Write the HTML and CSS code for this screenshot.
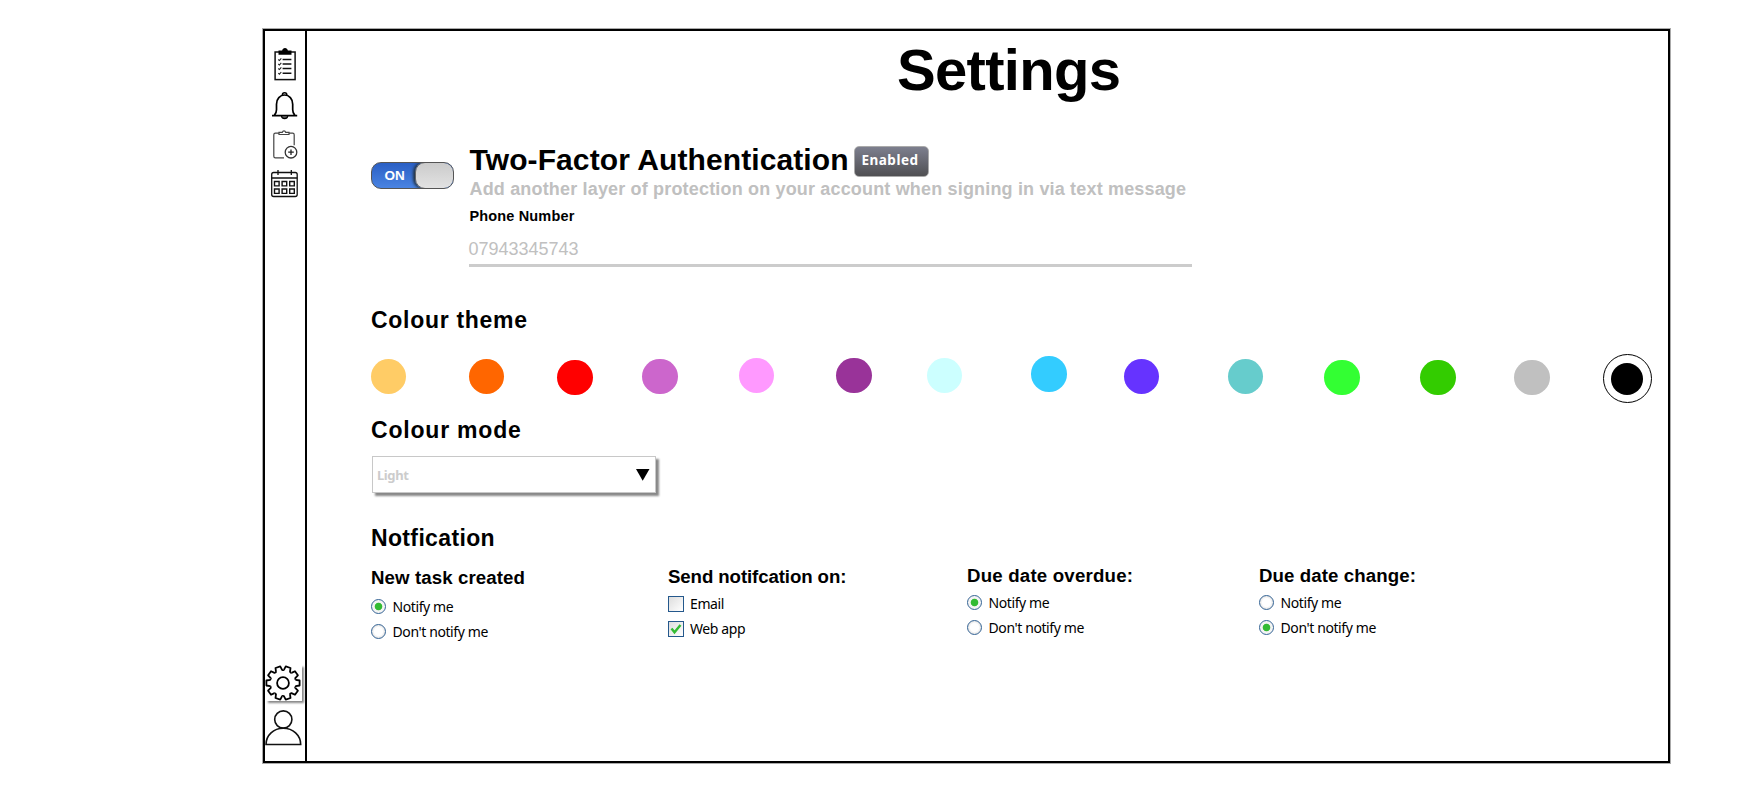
FILE: index.html
```html
<!DOCTYPE html>
<html lang="en">
<head>
<meta charset="utf-8">
<title>Settings</title>
<link rel="stylesheet" href="styles.css">
</head>
<body>
<div class="frame">
  <nav class="sidebar">
    <svg class="icon tasks" width="40" height="36" viewBox="265 46 40 36">
      <rect x="275.1" y="52" width="20" height="27.6" fill="none" stroke="#111" stroke-width="1.5"/>
      <path d="M278.500 54.800v-4.300h3.600c.4-1.500 1.400-2.500 2.900-2.500s2.500 1 2.900 2.500h3.600v4.300z" fill="#000"/>
      <path d="M282.600 59.600h8.800M282.600 64h8.800M282.600 68.500h8.800M282.600 73.200h8.800" stroke="#111" stroke-width="1.500"/>
      <path d="M278.300 59.500l1.100 1 1.900-2.200M278.300 64l1.100 1 1.900-2.200M278.300 68.500l1.100 1 1.900-2.200M278.300 73.200l1.100 1 1.900-2.200" fill="none" stroke="#222" stroke-width="1.100"/>
    </svg>
    <svg class="icon bell" width="40" height="30" viewBox="265 91 40 30">
      <path d="M272 115.600h25.200M274.300 115.300c1.500-1.600 2.200-3 2.200-5.600v-5.500c0-5.200 3.500-9.200 8.100-9.200s8.100 4 8.100 9.200v5.500c0 2.600.7 4 2.200 5.600" fill="none" stroke="#000" stroke-width="1.700"/>
      <path d="M282.400 95c0-3 4.400-3 4.400 0" fill="none" stroke="#000" stroke-width="1.600"/>
      <path d="M281.500 116c.5 3.600 5.700 3.600 6.200 0" fill="#555" stroke="#000" stroke-width="1.300"/>
    </svg>
    <svg class="icon add" width="40" height="32" viewBox="265 129 40 32">
      <path d="M284 157.800h-8.600c-1 0-1.600-.6-1.600-1.600v-21.400c0-1 .6-1.600 1.600-1.600h17.200c1 0 1.600.6 1.600 1.600v10.500" fill="none" stroke="#444" stroke-width="1.200"/>
      <path d="M279 134.500v-2.200h3.300c.3-1 .9-1.400 1.700-1.400s1.400.4 1.700 1.400h3.300v2.200z" fill="#fff" stroke="#444" stroke-width="1.200"/>
      <circle cx="291" cy="152.200" r="5.800" fill="#fff" stroke="#333" stroke-width="1.300"/>
      <path d="M288.200 152.200h5.600M291 149.400v5.600" stroke="#222" stroke-width="1.300"/>
    </svg>
    <svg class="icon calendar" width="40" height="30" viewBox="265 169 40 30">
      <rect x="271.700" y="172.500" width="25.500" height="24" rx="2" fill="none" stroke="#111" stroke-width="1.300"/>
      <path d="M271.700 178h25.500M278 170v5M291.300 170v5" stroke="#111" stroke-width="1.300"/>
      <path d="M274.500 181.500h4.600v4.400h-4.600zM282.100 181.500h4.600v4.400h-4.600zM289.700 181.500h4.600v4.400h-4.600zM274.500 189h4.600v4.400h-4.600zM282.100 189h4.600v4.400h-4.600zM289.700 189h4.600v4.400h-4.600z" fill="none" stroke="#111" stroke-width="1.400"/>
    </svg>
    <div class="gear-tile">
      <svg class="gear" width="36" height="36" viewBox="-18 -18 36 36">
        <defs><path id="tooth" d="M-3.200-12.800L-2.500-16.600H2.500L3.200-12.800Q4.500-11.800 4.950-12.200"/></defs>
        <g fill="none" stroke="#000" stroke-width="1.800" stroke-linejoin="round">
          <use href="#tooth" transform="rotate(18)"/><use href="#tooth" transform="rotate(54)"/>
          <use href="#tooth" transform="rotate(90)"/><use href="#tooth" transform="rotate(126)"/>
          <use href="#tooth" transform="rotate(162)"/><use href="#tooth" transform="rotate(198)"/>
          <use href="#tooth" transform="rotate(234)"/><use href="#tooth" transform="rotate(270)"/>
          <use href="#tooth" transform="rotate(306)"/><use href="#tooth" transform="rotate(342)"/>
          <circle r="5.900"/>
        </g>
      </svg>
    </div>
    <svg class="icon user" width="40" height="38" viewBox="265 709 40 38">
      <g fill="none" stroke="#111" stroke-width="1.600">
        <circle cx="283.300" cy="719.500" r="8.600"/>
        <path d="M266 744.500c0-9.500 7.700-16.300 17.300-16.300s17.400 6.800 17.400 16.300z"/>
      </g>
    </svg>
  </nav>
  <main class="main">
    <h1 class="title">Settings</h1>

    <section class="twofactor">
      <div class="toggle"><span class="toggle-label">ON</span><span class="knob"></span></div>
      <div class="tf-body">
        <div class="tf-head"><h2 class="tf-title">Two-Factor Authentication</h2><span class="badge">Enabled</span></div>
        <p class="tf-sub">Add another layer of protection on your account when signing in via text message</p>
        <div class="phone-label">Phone Number</div>
        <div class="phone">07943345743</div>
      </div>
    </section>

    <h3 class="heading theme">Colour theme</h3>
    <div class="swatches">
      <span class="dot sand"></span><span class="dot orange"></span><span class="dot red"></span><span class="dot orchid"></span><span class="dot pink"></span><span class="dot purple"></span><span class="dot ice"></span><span class="dot sky"></span><span class="dot indigo"></span><span class="dot teal"></span><span class="dot lime"></span><span class="dot green"></span><span class="dot grey"></span><span class="ring"><span class="dot black"></span></span>
    </div>

    <h3 class="heading mode">Colour mode</h3>
    <div class="select"><span>Light</span><svg width="14" height="12" viewBox="0 0 14 12"><path d="M0 0h13.500L6.700 11.700z"/></svg></div>

    <h3 class="heading notif">Notfication</h3>
    <div class="groups">
      <div class="group created">
        <h4 class="group-title t1">New task created</h4>
        <div class="option"><span class="radio on"></span>Notify me</div>
        <div class="option"><span class="radio"></span>Don't notify me</div>
      </div>
      <div class="group send">
        <h4 class="group-title t2">Send notifcation on:</h4>
        <div class="option"><span class="check"></span>Email</div>
        <div class="option"><span class="check"><svg width="12" height="12" viewBox="0 0 12 12"><path d="M1.500 5.500l3 3.800 6-7.300" fill="none" stroke="#3b3" stroke-width="2.400"/></svg></span>Web app</div>
      </div>
      <div class="group overdue">
        <h4 class="group-title t3">Due date overdue:</h4>
        <div class="option"><span class="radio on"></span>Notify me</div>
        <div class="option"><span class="radio"></span>Don't notify me</div>
      </div>
      <div class="group change">
        <h4 class="group-title t4">Due date change:</h4>
        <div class="option"><span class="radio"></span>Notify me</div>
        <div class="option"><span class="radio on"></span>Don't notify me</div>
      </div>
    </div>
  </main>
</div>
</body>
</html>
```

FILE: styles.css
```css
* { box-sizing: border-box; }
body { margin: 0; padding: 29px 0 0 263px; height: 800px; background: #fff; color: #000; font-family: "Liberation Sans", Arial, sans-serif; overflow: hidden; }
h1, h2, h3, h4, p { margin: 0; font-weight: bold; white-space: nowrap; }
svg { display: block; }

.frame { display: flex; width: 1407px; height: 734px; border: 2px solid #000; box-shadow: 0 0 0 1px #aaa; }
.sidebar { display: flex; flex-direction: column; width: 42px; flex: none; border-right: 2px solid #000; padding-top: 15px; }
.icon { flex: none; }
.bell { margin-top: 9px; }
.add { margin-top: 8px; }
.calendar { margin-top: 8px; }
.gear-tile { width: 36px; height: 36px; margin: 466px 0 0 1px; background: #fff; box-shadow: 2px 2px 2px #888; }
.gear { margin-left: -1px; }
.user { margin-top: 8px; }

.main { flex: 1; min-width: 0; padding: 7px 0 0 64px; }
.title { margin-left: 526px; font-size: 58px; line-height: 64px; letter-spacing: -.7px; }

.twofactor { display: flex; margin-top: 41px; }
.toggle { display: flex; flex: none; width: 83px; height: 27px; margin: 19px 15px 0 -.5px; border: 1px solid #555; border-radius: 10px; background: linear-gradient(#2a5fc4, #4a84e2); overflow: hidden; }
.toggle-label { width: 43px; padding-left: 13px; color: #fff; font: bold 13.500px/25px "Liberation Sans", sans-serif; }
.knob { width: 39px; height: 27px; margin: -1px -1px 0 0; border: 1px solid #666; border-radius: 10px; background: linear-gradient(#cbcbcb, #e2e2e2); box-shadow: -2px 0 3px #234; }
.tf-head { display: flex; height: 34px; }
.tf-body { width: 723px; }
.tf-title { width: 385px; padding-left: 1px; font-size: 30px; line-height: 34px; letter-spacing: .1px; }
.badge { width: 75px; height: 31px; margin: 3px 0 0 0; border: 1px solid #aaa; border-radius: 5px; background: linear-gradient(#7d7f8e, #505053); color: #fff; text-align: center; font: bold 13.500px/27px "Noto Sans", sans-serif; letter-spacing: .5px; padding-right: 2px; }
.tf-sub { margin: 2px 0 0 1px; font-size: 18px; line-height: 20px; letter-spacing: .17px; color: #c0c0c0; }
.phone-label { margin: 8px 0 0 1px; font-size: 14.5px; line-height: 18px; font-weight: bold; letter-spacing: .15px; }
.phone { margin-top: 14px; height: 28px; font-size: 18px; line-height: 20px; color: #c0c0c0; border-bottom: 3px solid #ccc; }

.heading { font-size: 23px; line-height: 26px; letter-spacing: .7px; }
.theme { margin-top: 40px; }
.swatches { display: flex; align-items: flex-start; height: 49px; margin-top: 21px; }
.dot { flex: none; width: 35.400px; height: 35.400px; border-radius: 50%; }
.sand { background: #fc6; margin: 5px 0 0 0; }
.orange { background: #f60; margin: 5px 0 0 62.300px; }
.red { background: #f00; margin: 6px 0 0 53.400px; }
.orchid { background: #c6c; margin: 5px 0 0 49.600px; }
.pink { background: #f9f; margin: 3.700px 0 0 61.100px; }
.purple { background: #939; margin: 3.600px 0 0 62px; }
.ice { background: #cff; margin: 3.700px 0 0 54.900px; }
.sky { background: #3cf; margin: 2.300px 0 0 69.400px; }
.indigo { background: #63f; margin: 5px 0 0 57.300px; }
.teal { background: #6cc; margin: 5px 0 0 68.300px; }
.lime { background: #3f3; margin: 6px 0 0 61px; }
.green { background: #3c0; margin: 6px 0 0 60.800px; }
.grey { background: #c0c0c0; margin: 6px 0 0 58.400px; }
.ring { display: grid; place-items: center; flex: none; width: 49px; height: 49px; margin-left: 53.400px; border: 1px solid #000; border-radius: 50%; }
.black { background: #000; width: 32px; height: 32px; }

.mode { margin-top: 14px; letter-spacing: .8px; }
.select { display: flex; align-items: center; justify-content: space-between; width: 284px; height: 37px; margin: 13px 0 0 1px; padding: 0 5px 0 4px; border: 1px solid #c8c8c8; background: #fff; box-shadow: 3px 3px 2px #888; color: #ccc; font: bold 13px/18px "Noto Sans", sans-serif; letter-spacing: -.4px; }

.notif { margin-top: 32px; letter-spacing: .35px; }
.groups { display: grid; grid-template-columns: 297px 299px 292px 200px; margin-top: 14px; }
.created { padding-top: 2px; }
.send { padding-top: 1px; }
.group-title { font-size: 18.670px; line-height: 22px; margin-bottom: 5px; }
.t1 { letter-spacing: .1px; }
.t2 { letter-spacing: -.1px; margin-bottom: 3px; }
.t3 { letter-spacing: .2px; margin-bottom: 3px; }
.t4 { letter-spacing: .1px; margin-bottom: 3px; }
.option { display: flex; align-items: center; height: 25px; white-space: nowrap; font: 14px/20px "Noto Sans", sans-serif; letter-spacing: -.4px; }
.radio { width: 15px; height: 15px; margin: 0 7px 0 -.5px; border: 1.500px solid #356495; border-radius: 50%; background: radial-gradient(circle, #fff 45%, #e0e0e0 75%); }
.radio.on { background: radial-gradient(circle, #3b3 3.400px, #f4f4f4 4.200px); }
.check { display: grid; place-items: center; width: 16px; height: 16px; margin-right: 6px; border: 1px solid #24588c; background: linear-gradient(135deg, #ddd, #fff); }
```
